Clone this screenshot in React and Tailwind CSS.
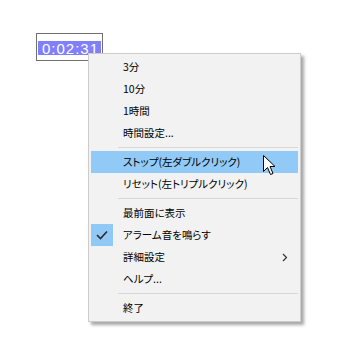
import React from "react";

const font = { fontFamily: '"Noto Sans CJK JP", "Noto Sans", sans-serif' };

function Item({ label, highlight, checked, submenu }) {
  return (
    <div className={`flex h-[22px] items-center ${highlight ? "bg-[#91c9f7]" : ""}`}>
      <div className={`flex h-[22px] w-[22px] items-center justify-center ${checked ? "bg-[#90c8f6]" : ""}`}>
        {checked && (
          <svg width="12" height="10" viewBox="0 0 12 10">
            <path d="M1 5 L4.5 8.5 L11 1.5" fill="none" stroke="#2b2b2b" strokeWidth="1.6" />
          </svg>
        )}
      </div>
      <span className="ml-[10px] flex-1 text-[10.5px] leading-none text-black [font-feature-settings:'palt']">
        {label}
      </span>
      {submenu && (
        <svg width="6" height="9" viewBox="0 0 6 9" className="mr-[10px]">
          <path d="M1 1 L4.5 4.5 L1 8" fill="none" stroke="#333" strokeWidth="1.2" />
        </svg>
      )}
    </div>
  );
}

function Sep() {
  return (
    <div className="flex h-[7px] items-center pl-[27px]">
      <div className="h-px w-full bg-[#d7d7d7]" />
    </div>
  );
}

export default function App() {
  return (
    <div className="relative h-[350px] w-[350px] overflow-hidden bg-white" style={font}>
      {/* timer window */}
      <div className="absolute left-[36px] top-[33px] flex h-[28px] w-[67px] flex-col border border-[#707070] bg-white px-[1px] pt-[7px]">
        <div className="flex h-[14px] items-center justify-center bg-[#8080ff]">
          <span
            className="pl-[2px] text-[15px] leading-none tracking-[1px] text-white"
            style={{ fontFamily: '"Liberation Sans", Arial, sans-serif' }}
          >
            0:02:31
          </span>
        </div>
      </div>

      {/* context menu */}
      <div className="absolute left-[88px] top-[53px] w-[213px] border border-[#cccccc] bg-[#f2f2f2] p-[2px] shadow-[3px_3px_3px_rgba(0,0,0,0.35)]">
        <Item label="3分" />
        <Item label="10分" />
        <Item label="1時間" />
        <Item label="時間設定..." />
        <Sep />
        <Item label="ストップ(左ダブルクリック)" highlight />
        <Item label="リセット(左トリプルクリック)" />
        <Sep />
        <Item label="最前面に表示" />
        <Item label="アラーム音を鳴らす" checked />
        <Item label="詳細設定" submenu />
        <Item label="ヘルプ..." />
        <Sep />
        <Item label="終了" />
      </div>

      {/* mouse cursor */}
      <svg
        className="absolute left-[263px] top-[155px]"
        width="13"
        height="21"
        viewBox="0 0 13 21"
      >
        <path
          d="M0.5 0.5 L0.5 16.5 L4.5 12.5 L7.5 19.5 L10 18.5 L7 11.5 L12 11.5 Z"
          fill="white"
          stroke="black"
          strokeWidth="1"
          strokeLinejoin="miter"
        />
      </svg>
    </div>
  );
}
